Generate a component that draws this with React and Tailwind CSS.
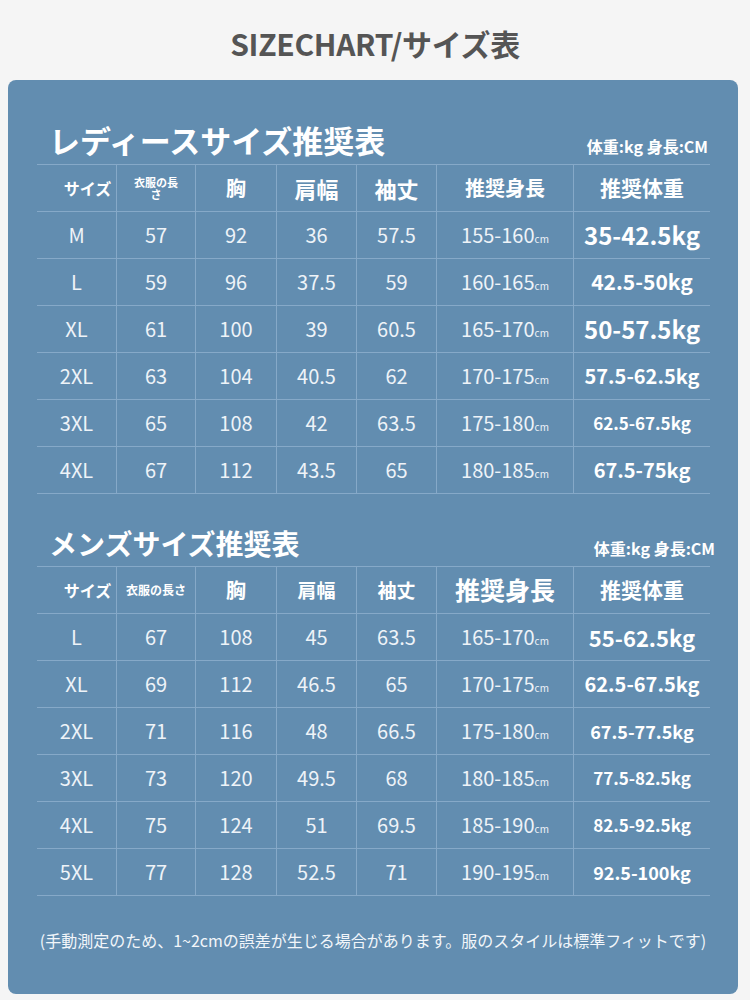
import React from "react";

const FONT = { fontFamily: '"Noto Sans CJK JP", "Noto Sans", sans-serif' };

// column widths, left to right
const COLS = ["w-[79px]", "w-[79px]", "w-[81px]", "w-[80px]", "w-[80px]", "w-[137px]", "w-[137px]"];

const ladies = {
  head: [
    <span className="text-[16px] font-bold pl-[22px]">サイズ</span>,
    <div className="flex flex-col items-center text-[11px] font-bold leading-[12px]">
      <span>衣服の長</span>
      <span>さ</span>
    </div>,
    <span className="text-[20px] font-bold">胸</span>,
    <span className="text-[22px] font-bold">肩幅</span>,
    <span className="text-[22px] font-bold">袖丈</span>,
    <span className="text-[20px] font-bold">推奨身長</span>,
    <span className="text-[21px] font-bold">推奨体重</span>,
  ],
  rows: [
    ["M", "57", "92", "36", "57.5", "155-160", ["35-42.5kg", "text-[24px]"]],
    ["L", "59", "96", "37.5", "59", "160-165", ["42.5-50kg", "text-[21px]"]],
    ["XL", "61", "100", "39", "60.5", "165-170", ["50-57.5kg", "text-[24px]"]],
    ["2XL", "63", "104", "40.5", "62", "170-175", ["57.5-62.5kg", "text-[20px]"]],
    ["3XL", "65", "108", "42", "63.5", "175-180", ["62.5-67.5kg", "text-[17px]"]],
    ["4XL", "67", "112", "43.5", "65", "180-185", ["67.5-75kg", "text-[20px]"]],
  ],
};

const mens = {
  head: [
    <span className="text-[16px] font-bold pl-[22px]">サイズ</span>,
    <span className="text-[12px] font-bold">衣服の長さ</span>,
    <span className="text-[20px] font-bold">胸</span>,
    <span className="text-[19px] font-bold">肩幅</span>,
    <span className="text-[19px] font-bold">袖丈</span>,
    <span className="text-[25px] font-bold">推奨身長</span>,
    <span className="text-[21px] font-bold">推奨体重</span>,
  ],
  rows: [
    ["L", "67", "108", "45", "63.5", "165-170", ["55-62.5kg", "text-[22px]"]],
    ["XL", "69", "112", "46.5", "65", "170-175", ["62.5-67.5kg", "text-[20px]"]],
    ["2XL", "71", "116", "48", "66.5", "175-180", ["67.5-77.5kg", "text-[18px]"]],
    ["3XL", "73", "120", "49.5", "68", "180-185", ["77.5-82.5kg", "text-[17px]"]],
    ["4XL", "75", "124", "51", "69.5", "185-190", ["82.5-92.5kg", "text-[17px]"]],
    ["5XL", "77", "128", "52.5", "71", "190-195", ["92.5-100kg", "text-[18px]"]],
  ],
};

function Cell({ i, children, className = "" }) {
  return (
    <div
      className={`${COLS[i]} h-full flex items-center justify-center ${
        i > 0 ? "border-l border-[#86a9c8]" : ""
      } ${className}`}
    >
      {children}
    </div>
  );
}

function SizeTable({ data }) {
  return (
    <div className="ml-[29px] w-[673px] border-t border-[#86a9c8]">
      <div className="flex h-[47px] border-b border-[#86a9c8] text-white">
        {data.head.map((h, i) => (
          <Cell key={i} i={i}>{h}</Cell>
        ))}
      </div>
      {data.rows.map((r, ri) => (
        <div key={ri} className="flex h-[47px] border-b border-[#86a9c8] text-[#eef3f8]">
          {r.slice(0, 5).map((v, i) => (
            <Cell key={i} i={i} className="text-[20px]">{v}</Cell>
          ))}
          <Cell i={5} className="text-[20px]">
            <span>
              {r[5]}
              <span className="text-[10px]">cm</span>
            </span>
          </Cell>
          <Cell i={6} className={`${r[6][1]} font-bold text-white`}>{r[6][0]}</Cell>
        </div>
      ))}
    </div>
  );
}

export default function App() {
  return (
    <div className="w-[750px] h-[1000px] bg-[#f5f5f5] overflow-hidden" style={FONT}>
      <div className="h-[80px] flex items-center justify-center pt-[6px]">
        <h1 className="text-[30px] font-bold text-[#555555] tracking-[-0.3px]">SIZECHART/サイズ表</h1>
      </div>

      <div className="ml-[8px] w-[730px] h-[914px] rounded-[8px] bg-[#628db0]">
        <div className="h-[84px] flex items-end justify-between pl-[41px] pr-[30px] pb-[6px]">
          <h2 className="text-[31px] leading-[36px] font-bold text-white">レディースサイズ推奨表</h2>
          <span className="text-[16px] leading-[20px] font-bold text-white mb-[2px]">体重:kg 身長:CM</span>
        </div>
        <SizeTable data={ladies} />

        <div className="h-[72px] flex items-end justify-between pl-[41px] pr-[23px] pb-[6px]">
          <h2 className="text-[28px] leading-[34px] font-bold text-white">メンズサイズ推奨表</h2>
          <span className="text-[16px] leading-[20px] font-bold text-white mb-[2px]">体重:kg 身長:CM</span>
        </div>
        <SizeTable data={mens} />

        <p className="mt-[32px] text-center text-[16px] leading-[24px] text-[#f2f6fa]">
          (手動測定のため、1~2cmの誤差が生じる場合があります。服のスタイルは標準フィットです)
        </p>
      </div>
    </div>
  );
}
